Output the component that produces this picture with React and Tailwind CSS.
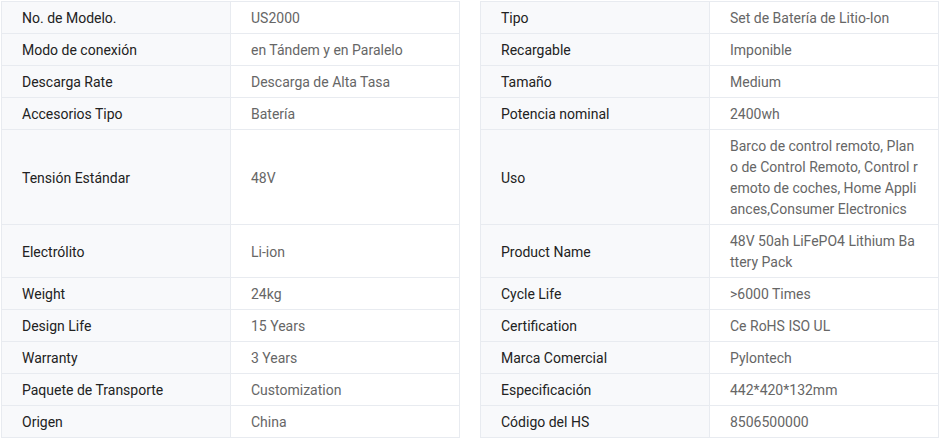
const left = [
  ["No. de Modelo.", "US2000"],
  ["Modo de conexión", "en Tándem y en Paralelo"],
  ["Descarga Rate", "Descarga de Alta Tasa"],
  ["Accesorios Tipo", "Batería"],
  ["Tensión Estándar", "48V", "h-[95px]"],
  ["Electrólito", "Li-ion", "h-[53px]"],
  ["Weight", "24kg"],
  ["Design Life", "15 Years"],
  ["Warranty", "3 Years"],
  ["Paquete de Transporte", "Customization"],
  ["Origen", "China"],
];

const right = [
  ["Tipo", "Set de Batería de Litio-Ion"],
  ["Recargable", "Imponible"],
  ["Tamaño", "Medium"],
  ["Potencia nominal", "2400wh"],
  ["Uso", "Barco de control remoto, Plano de Control Remoto, Control remoto de coches, Home Appliances,Consumer Electronics", "h-[95px]"],
  ["Product Name", "48V 50ah LiFePO4 Lithium Battery Pack", "h-[53px]"],
  ["Cycle Life", ">6000 Times"],
  ["Certification", "Ce RoHS ISO UL"],
  ["Marca Comercial", "Pylontech"],
  ["Especificación", "442*420*132mm"],
  ["Código del HS", "8506500000"],
];

function SpecTable({ rows }) {
  return (
    <table className="w-[459px] table-fixed border-collapse">
      <tbody>
        {rows.map(([label, value, h]) => (
          <tr key={label} className={h || "h-[32px]"}>
            <td className="w-1/2 border border-[#e8ebf0] bg-[#f8f9fb] pl-5 pr-4 pt-[6px] pb-[4px] align-middle text-[#222]">
              {label}
            </td>
            <td className="w-1/2 border border-[#e8ebf0] bg-white pl-5 pr-5 pt-[6px] pb-[4px] align-middle text-[#666] break-all">
              {value}
            </td>
          </tr>
        ))}
      </tbody>
    </table>
  );
}

export default function App() {
  return (
    <div className="w-[941px] h-[442px] bg-white pl-px pt-px flex items-start gap-5 text-[14px] leading-[21px] font-['Roboto',sans-serif]">
      <SpecTable rows={left} />
      <SpecTable rows={right} />
    </div>
  );
}
